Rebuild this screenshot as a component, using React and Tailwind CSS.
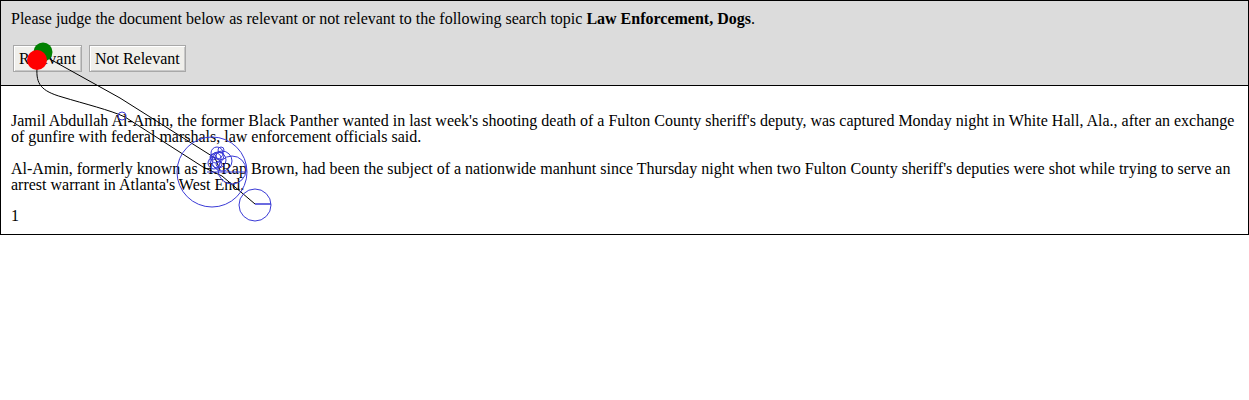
import React from "react";

const serif = { fontFamily: '"Liberation Serif", "Times New Roman", serif' };

function Overlay() {
  const blue = "#3a3ad6";
  return (
    <svg
      className="absolute left-0 top-0 pointer-events-none"
      width="1249"
      height="400"
      viewBox="0 0 1249 400"
    >
      {/* gaze paths */}
      <path
        d="M37 68 C36 84 41 91 62 97 C85 104 110 110 125 117 L203 167 L222 176 L255 204"
        fill="none"
        stroke="#000"
        strokeWidth="1"
      />
      <path
        d="M48 58 L120 98 L215 158 L220 170"
        fill="none"
        stroke="#000"
        strokeWidth="1"
      />
      <line x1="255" y1="204" x2="271" y2="204" stroke={blue} strokeWidth="1.5" />

      {/* fixations */}
      <circle cx="122" cy="116" r="4" fill="none" stroke={blue} />
      <circle cx="212" cy="172" r="35" fill="none" stroke={blue} />
      <circle cx="255" cy="205" r="16" fill="none" stroke={blue} />
      <circle cx="218" cy="160" r="8" fill="none" stroke={blue} />
      <circle cx="216" cy="158" r="5" fill="none" stroke={blue} />
      <circle cx="220" cy="156" r="4" fill="none" stroke={blue} />
      <circle cx="214" cy="163" r="6" fill="none" stroke={blue} />
      <circle cx="219" cy="164" r="3" fill="none" stroke={blue} />
      <circle cx="222" cy="161" r="10" fill="none" stroke={blue} />
      <circle cx="213" cy="157" r="3" fill="none" stroke={blue} />
      <circle cx="217" cy="153" r="6" fill="none" stroke={blue} />
      <circle cx="221" cy="150" r="3" fill="none" stroke={blue} />
      <circle cx="232" cy="170" r="14" fill="none" stroke={blue} />
      <line x1="207" y1="172" x2="246" y2="172" stroke={blue} strokeWidth="1" />

      {/* clicks */}
      <circle cx="43" cy="52" r="9.5" fill="#008000" />
      <circle cx="37" cy="60" r="10" fill="#ff0000" />
    </svg>
  );
}

export default function App() {
  return (
    <div className="relative w-[1249px] h-[400px] bg-white text-black" style={serif}>
      <div className="border border-black">
        {/* HEADER */}
        <div className="bg-[#dcdcdc] border-b border-black px-[10px] pt-[10px] pb-[13px] text-[16px] leading-[16px]">
          <div>
            Please judge the document below as relevant or not relevant to the following search topic{" "}
            <b>Law Enforcement, Dogs</b>.
          </div>
          <div className="flex gap-[7px] mt-[18px] ml-[2px]">
            <button className="h-[27px] px-[5px] bg-[#f0efeb] border border-[#a8a8a8] shadow-[inset_1px_1px_0_#ffffff,inset_-1px_-1px_0_#c8c8c8] text-[16px] leading-[16px]">
              Relevant
            </button>
            <button className="h-[27px] px-[5px] bg-[#f0efeb] border border-[#a8a8a8] shadow-[inset_1px_1px_0_#ffffff,inset_-1px_-1px_0_#c8c8c8] text-[16px] leading-[16px]">
              Not Relevant
            </button>
          </div>
        </div>

        {/* DOCUMENT */}
        <div className="px-[10px] pt-[11px] pb-[10px] text-[16px] leading-[16px]">
          <p className="mt-[16px]">
            Jamil Abdullah Al-Amin, the former Black Panther wanted in last week's shooting death of a Fulton
            County sheriff's deputy, was captured Monday night in White Hall, Ala., after an exchange of gunfire
            with federal marshals, law enforcement officials said.
          </p>
          <p className="mt-[16px]">
            Al-Amin, formerly known as H. Rap Brown, had been the subject of a nationwide manhunt since Thursday
            night when two Fulton County sheriff's deputies were shot while trying to serve an arrest warrant in
            Atlanta's West End.
          </p>
          <div className="mt-[15px]">1</div>
        </div>
      </div>
      <Overlay />
    </div>
  );
}
